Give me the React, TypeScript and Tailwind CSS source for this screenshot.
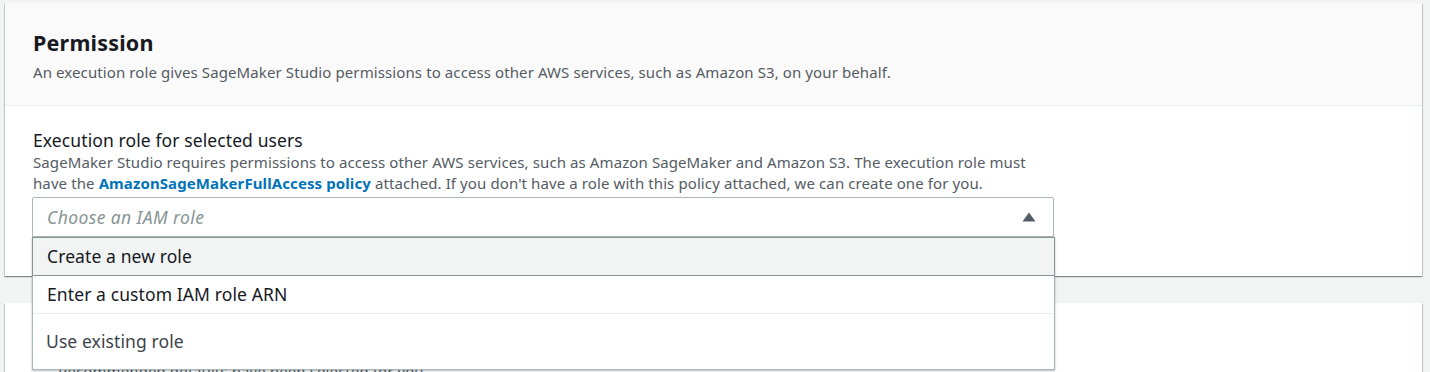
const card = "bg-white shadow-[0_1px_1px_0_rgba(0,28,36,0.3),1px_1px_1px_0_rgba(0,28,36,0.15),-1px_1px_1px_0_rgba(0,28,36,0.15)]"

const Caret = () => (
    <svg width="14" height="10" viewBox="0 0 14 10" className="text-[#545b64]">
        <path d="M7 0.5 L13.5 9.5 L0.5 9.5 Z" fill="currentColor" />
    </svg>
)

const App = () => {
    return (
        <div className="min-h-[372px] h-[372px] overflow-hidden bg-[#f2f3f3] pt-[3px] pl-[5px] pr-[8px] font-['Noto_Sans','Open_Sans',sans-serif] text-[#16191f]">
            <section className={card}>
                <div className="bg-[#fafafa] border-b border-[#eaeded] px-[28px] pt-[26px] pb-[22px]">
                    <h2 className="text-[21.5px] leading-[28px] font-bold tracking-[0.2px]">Permission</h2>
                    <p className="text-[15px] leading-[22px] tracking-[0.1px] text-[#545b64] mt-[4px]">
                        An execution role gives SageMaker Studio permissions to access other AWS services, such as Amazon S3, on your behalf.
                    </p>
                </div>

                <div className="px-[27px] pt-[22px] pb-[39px]">
                    <label className="block text-[17.5px] leading-[24px] tracking-[0.1px] px-[1px]">Execution role for selected users</label>
                    <p className="text-[15px] leading-[21px] tracking-[0.1px] text-[#545b64] px-[1px]">
                        SageMaker Studio requires permissions to access other AWS services, such as Amazon SageMaker and Amazon S3. The execution role must
                        <br />
                        have the <a className="text-[#0073bb] font-bold">AmazonSageMakerFullAccess policy</a> attached. If you don't have a role with this policy attached, we can create one for you.
                    </p>

                    <div className="relative w-[1022px] mt-[3px]">
                        <div className="flex items-center justify-between h-[40px] border border-[#aab7b8] rounded-t-[2px] bg-white pl-[14px] pr-[17px]">
                            <span className="italic text-[17.5px] tracking-[0.4px] text-[#879596]">Choose an IAM role</span>
                            <Caret />
                        </div>

                        <ul className="absolute left-0 top-full w-[1023px] z-10 bg-white border border-[#aab7b8] border-t-0 shadow-[0_1px_2px_0_rgba(0,28,36,0.3)] text-[17.5px] tracking-[0.1px]">
                            <li className="h-[39px] flex items-center pl-[14px] bg-[#f2f3f3] border border-[#879596] -mx-px">Create a new role</li>
                            <li className="h-[38px] flex items-center pl-[14px] border-b border-[#eaeded]">Enter a custom IAM role ARN</li>
                            <li className="h-[55px] flex items-center pl-[13px] text-[#3d434b]">Use existing role</li>
                        </ul>
                    </div>
                </div>
            </section>

            <section className={`${card} mt-[27px] bg-[#fafafa] h-[120px] px-[28px] pt-[57px]`}>
                <p className="pl-[25px] text-[15px] tracking-[0.1px] text-[#545b64]">Recommended defaults have been selected for you.</p>
            </section>
        </div>
    )
}

export default App
